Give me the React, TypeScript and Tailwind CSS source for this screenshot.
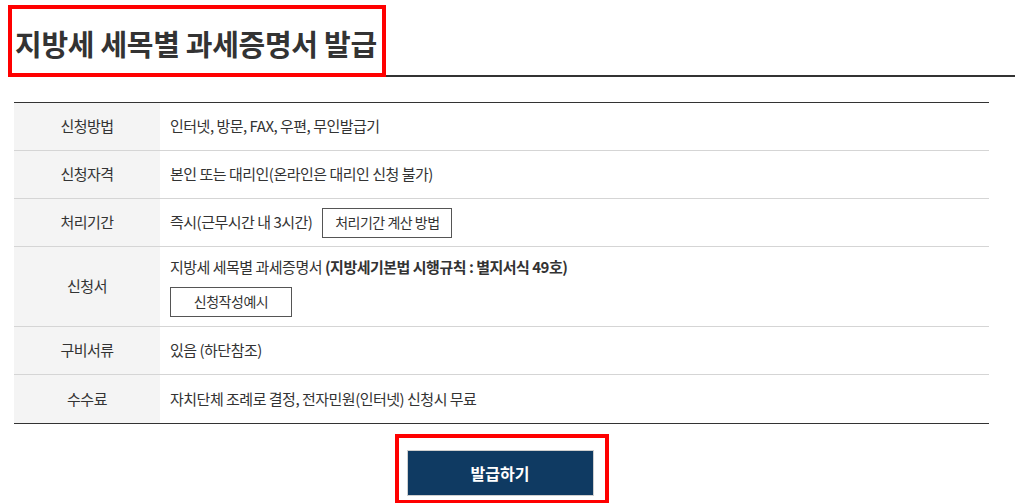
import React from "react";

interface Row {
  label: string;
  content: React.ReactNode;
  tall?: boolean;
}

const font = "font-['Noto_Sans_CJK_KR','Noto_Sans',sans-serif]";

const rows: Row[] = [
  { label: "신청방법", content: "인터넷, 방문, FAX, 우편, 무인발급기" },
  { label: "신청자격", content: "본인 또는 대리인(온라인은 대리인 신청 불가)" },
  {
    label: "처리기간",
    content: (
      <div className="flex items-center gap-[10px]">
        <span>즉시(근무시간 내 3시간)</span>
        <button className="h-[30px] w-[130px] border border-[#555] bg-white text-[14px] text-[#333] tracking-[-0.5px]">
          처리기간 계산 방법
        </button>
      </div>
    ),
  },
  {
    label: "신청서",
    tall: true,
    content: (
      <div className="flex flex-col items-start gap-[8px]">
        <span>
          지방세 세목별 과세증명서{" "}
          <b className="font-bold">(지방세기본법 시행규칙 : 별지서식 49호)</b>
        </span>
        <button className="h-[30px] w-[122px] border border-[#555] bg-white text-[14px] text-[#333] tracking-[-0.5px]">
          신청작성예시
        </button>
      </div>
    ),
  },
  { label: "구비서류", content: "있음 (하단참조)" },
  { label: "수수료", content: "자치단체 조례로 결정, 전자민원(인터넷) 신청시 무료" },
];

export default function App() {
  return (
    <div className={`w-[1015px] h-[503px] bg-white text-[#333] ${font}`}>
      {/* Title */}
      <div className="flex items-end pt-[5px] pl-[8px]">
        <div className="h-[72px] w-[378px] border-[4px] border-[#ff0000] flex items-center pl-[3px] pt-[4px]">
          <h2 className="text-[29px] font-bold text-[#333] tracking-[-0.3px] leading-none">
            지방세 세목별 과세증명서 발급
          </h2>
        </div>
        <div className="flex-1 h-[2px] bg-[#333]" />
      </div>

      {/* Table */}
      <div className="ml-[14px] mt-[25px] w-[975px] border-t border-b border-[#333]">
        {rows.map((row, i) => (
          <div
            key={row.label}
            className={`flex ${i < rows.length - 1 ? "border-b border-[#d5d5d5]" : ""} ${
              row.tall ? "h-[80px]" : "h-[48px]"
            }`}
          >
            <div className="w-[146px] shrink-0 bg-[#f4f4f4] flex items-center justify-center text-[15px] tracking-[-0.5px]">
              {row.label}
            </div>
            <div className="flex-1 flex items-center pl-[10px] text-[15px] tracking-[-0.5px]">
              {row.content}
            </div>
          </div>
        ))}
      </div>

      {/* Issue button */}
      <div className="ml-[14px] w-[975px] flex justify-center mt-[10px]">
        <div className="border-[4px] border-[#ff0000] pt-[12px] pb-[4px] pl-[8px] pr-[11px]">
          <button className="h-[46px] w-[187px] bg-[#0f3a62] border border-[#cfcfcf] text-white text-[16px] font-bold">
            발급하기
          </button>
        </div>
      </div>
    </div>
  );
}
